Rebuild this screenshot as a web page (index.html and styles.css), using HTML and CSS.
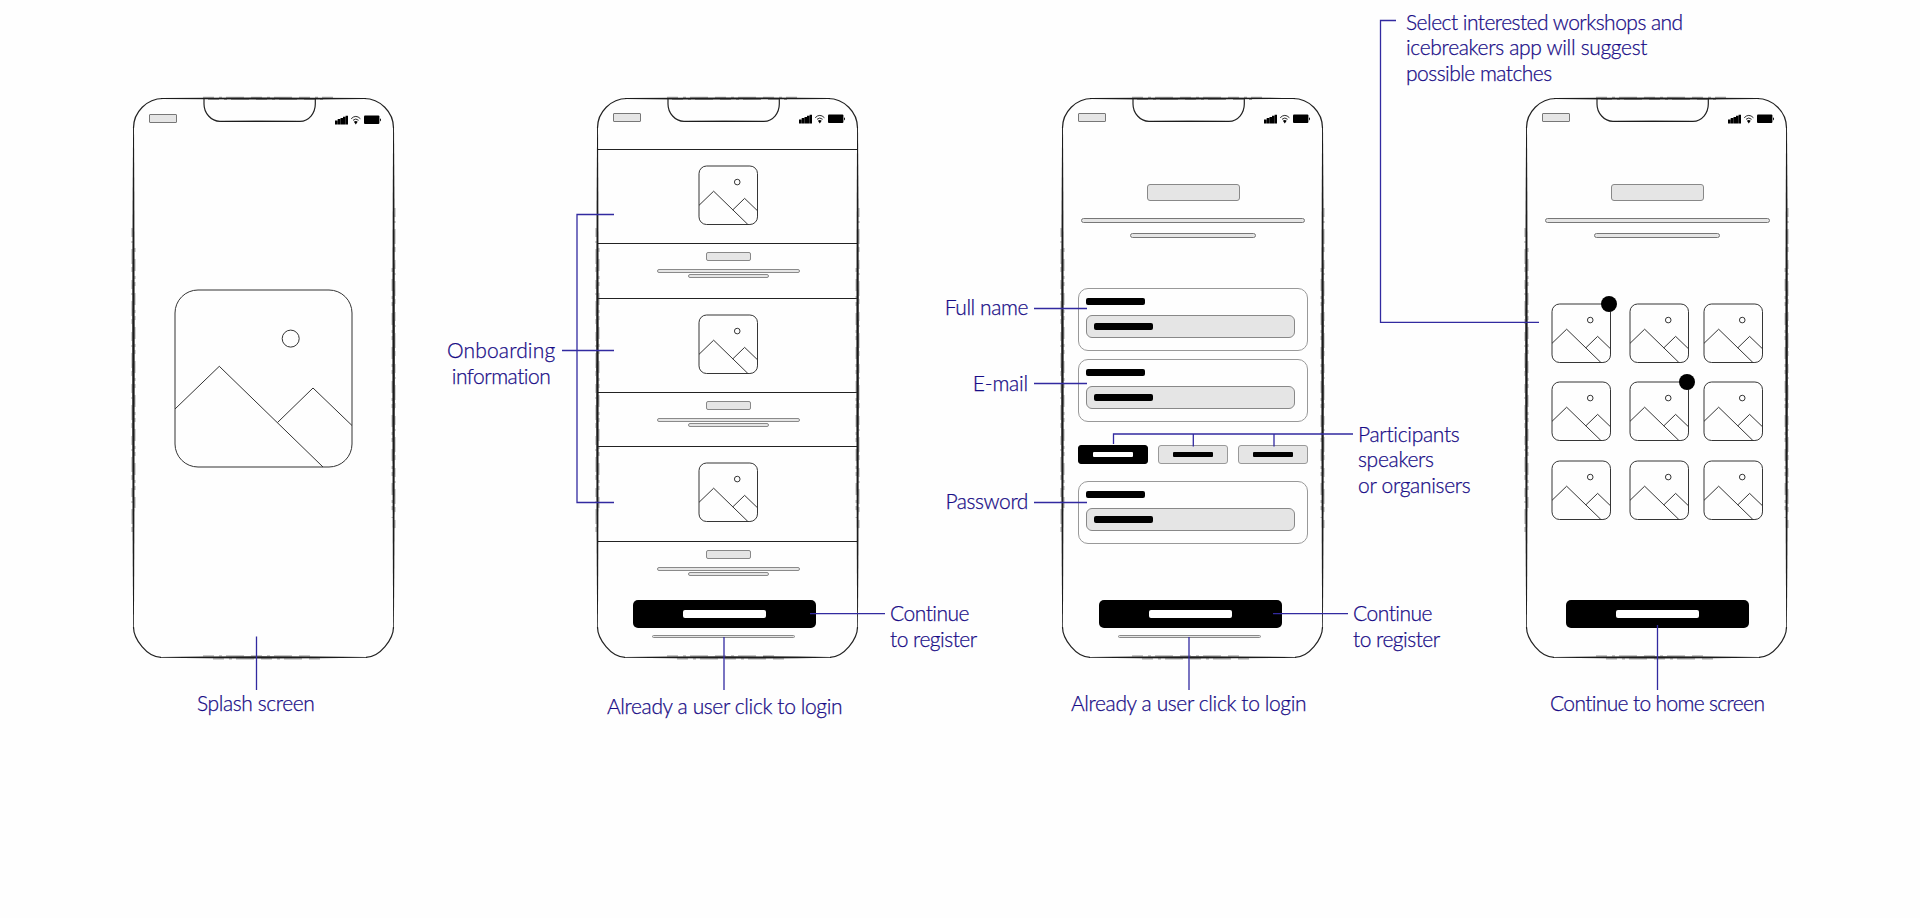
FILE: index.html
```html
<!DOCTYPE html>
<html lang="en">
<head>
    <meta charset="UTF-8">
    <meta name="viewport" content="width=device-width, initial-scale=1.0">
    <title>App Wireframes</title>
    <link rel="stylesheet" href="styles.css">
</head>
<body>
    <!-- Shared drawings -->
    <svg class="defs" width="0" height="0">
        <symbol id="frame" viewBox="-3 -3 267 566">
            <g fill="none" stroke="#222" stroke-width="1.2">
                <path d="M.5 30C.5 14 14 .5 30 .5M231 .5C247 .5 260.500 14 260.500 30M.5 529C.5 541 14 559.300 28 559.300M233 559.300C247 559.300 260.500 541 260.500 529"/>
                <path d="M71 .5V6C71 15 78 23.300 87 23.300H167C176 23.300 182.300 15 182.300 6V.5"/>
            </g>
            <g fill="#1c1c1c">
                <path d="M.1 29Q-1.700 280 .2 531L.9 531Q2.300 280 1 29Z"/>
                <path d="M260.100 29Q258.700 280 260.200 531L260.900 531Q262.700 280 261 29Z"/>
                <path d="M28 .1Q130 -1.200 233 .1V.9Q130 1.900 28 .9Z"/>
                <path d="M27 558.900Q130 557.700 234 558.900V559.700Q130 561.300 27 559.700Z"/>
                <path d="M88 22.900Q127 22.500 167 22.900V23.700Q127 24.400 88 23.700Z"/>
            </g>
            <!-- pencil grain along the thick parts -->
            <g fill="none" stroke="#444" stroke-width=".6">
                <path d="M-.9 130V440M261.900 110V430" stroke-dasharray="9 4 2 6 15 3 5 8"/>
                <path d="M1.900 150V410M259.200 170V420" stroke-dasharray="4 7 12 5 3 3"/>
                <path d="M70 -.7H200M75 1.400H190M80 560.900H190M70 558H180" stroke-dasharray="11 5 3 4 18 7"/>
            </g>
        </symbol>
        <symbol id="picture" viewBox="0 0 177 177">
            <rect x="0" y="0" width="177" height="177" rx="23"/>
            <circle cx="115.700" cy="48.600" r="8.500"/>
            <path d="M0 119L44.300 76.300L148 177M102.500 132.500L138 98L177 135.500"/>
        </symbol>
        <symbol id="status" viewBox="0 0 47 10">
            <path d="M0 5.500h2.500v4H0zM2.700 4h2.600v5.500H2.700zM5.500 3h2.500v6.500H5.500zM8 1.800h2.400v7.700H8zM10.600 .8H13v8.700h-2.400z"/>
            <path d="M16.200 3.700Q20.800-.9 25.400 3.700M18 5.300Q20.800 2.700 23.600 5.300" fill="none" stroke="#111" stroke-width=".9"/>
            <path d="M18.900 6.700Q20.800 5.200 22.700 6.700L20.800 9.400Z"/>
            <rect x="29" y=".6" width="15.400" height="8.400" rx="1"/>
            <path d="M45 3.200Q47 4.800 45 6.400z"/>
        </symbol>
    </svg>

    <main class="board">
        <!-- Splash -->
        <section class="phone">
            <svg class="frame"><use href="#frame"/></svg>
            <div class="status-bar first"><span class="time"></span><svg class="status-icons"><use href="#status"/></svg></div>
            <svg class="picture big"><use href="#picture"/></svg>
        </section>

        <!-- Onboarding -->
        <section class="phone">
            <svg class="frame"><use href="#frame"/></svg>
            <div class="status-bar"><span class="time"></span><svg class="status-icons"><use href="#status"/></svg></div>
            <div class="slide"><svg class="picture"><use href="#picture"/></svg></div>
            <div class="caption"><i class="tag"></i><i class="line"></i><i class="line short"></i></div>
            <div class="slide"><svg class="picture"><use href="#picture"/></svg></div>
            <div class="caption"><i class="tag"></i><i class="line"></i><i class="line short"></i></div>
            <div class="slide"><svg class="picture"><use href="#picture"/></svg></div>
            <div class="caption"><i class="tag"></i><i class="line"></i><i class="line short"></i></div>
            <div class="footer onboarding"><div class="button"><i></i></div><i class="line login"></i></div>
        </section>

        <!-- Register -->
        <section class="phone">
            <svg class="frame"><use href="#frame"/></svg>
            <div class="status-bar"><span class="time"></span><svg class="status-icons"><use href="#status"/></svg></div>
            <div class="heading"><i class="title"></i><i class="text"></i><i class="text short"></i></div>
            <div class="form">
                <div class="field"><i class="ink"></i><div class="input"><i class="ink"></i></div></div>
                <div class="field"><i class="ink"></i><div class="input"><i class="ink"></i></div></div>
                <div class="tabs"><div class="tab active"><i></i></div><div class="tab"><i></i></div><div class="tab"><i></i></div></div>
                <div class="field"><i class="ink"></i><div class="input"><i class="ink"></i></div></div>
            </div>
            <div class="footer register"><div class="button"><i></i></div><i class="line login"></i></div>
        </section>

        <!-- Interests -->
        <section class="phone">
            <svg class="frame"><use href="#frame"/></svg>
            <div class="status-bar"><span class="time"></span><svg class="status-icons"><use href="#status"/></svg></div>
            <div class="heading"><i class="title"></i><i class="text"></i><i class="text short"></i></div>
            <div class="gallery">
                <div class="item selected"><svg class="picture"><use href="#picture"/></svg></div>
                <div class="item"><svg class="picture"><use href="#picture"/></svg></div>
                <div class="item"><svg class="picture"><use href="#picture"/></svg></div>
                <div class="item"><svg class="picture"><use href="#picture"/></svg></div>
                <div class="item selected"><svg class="picture"><use href="#picture"/></svg></div>
                <div class="item"><svg class="picture"><use href="#picture"/></svg></div>
                <div class="item"><svg class="picture"><use href="#picture"/></svg></div>
                <div class="item"><svg class="picture"><use href="#picture"/></svg></div>
                <div class="item"><svg class="picture"><use href="#picture"/></svg></div>
            </div>
            <div class="footer interests"><div class="button"><i></i></div></div>
        </section>
    </main>

    <!-- Annotations -->
    <svg class="leaders" viewBox="0 0 1920 918">
        <path d="M256.500 636.500V690M724 637V690M1189 637V690M1657.500 625V690"/>
        <path d="M614 214.500H577V502.500H614M562 350.500H614"/>
        <path d="M1034 308.500H1087M1034 383.500H1087M1034 502.500H1087"/>
        <path d="M1113.500 444V434H1353M1193.300 434V446.500M1274 434V446.500"/>
        <path d="M810 613.700H885M1273 613.700H1348"/>
        <path d="M1396 20.500H1380.500V322.300H1539"/>
    </svg>
    <p class="label splash">Splash screen</p>
    <p class="label onboarding-info">Onboarding<br><span class="tight">information</span></p>
    <p class="label continue-a">Continue<br>to register</p>
    <p class="label login-a">Already a user click to login</p>
    <p class="label full-name">Full name</p>
    <p class="label email">E-mail</p>
    <p class="label password">Password</p>
    <p class="label roles">Participants<br>speakers<br>or organisers</p>
    <p class="label continue-b">Continue<br>to register</p>
    <p class="label login-b">Already a user click to login</p>
    <p class="label select">Select interested workshops and<br><span class="loose">icebreakers app will suggest</span><br>possible matches</p>
    <p class="label home">Continue to home screen</p>
</body>
</html>
```
FILE: styles.css
```css
* {
    box-sizing: border-box;
}
body {
    margin: 0;
    height: 918px;
    position: relative;
    overflow: hidden;
    background: #fefefe;
    font-family: Lato, "Liberation Sans", sans-serif;
}
i {
    display: block;
}
.defs {
    position: absolute;
}
.board {
    display: flex;
    gap: 203.3px;
    padding: 98px 0 0 133px;
}
.phone {
    position: relative;
    flex: none;
    display: flex;
    flex-direction: column;
    width: 261px;
    height: 560px;
}
.frame {
    position: absolute;
    left: -3px;
    top: -3px;
    width: 267px;
    height: 566px;
}
.status-bar {
    flex: none;
    display: flex;
    justify-content: space-between;
    align-items: flex-start;
    height: 51px;
    padding: 15px 12px 0 16px;
}
.status-bar.first {
    padding-top: 16px;
}
.time {
    width: 28px;
    height: 9px;
    background: #e5e5e5;
    border: 1px solid #777;
    border-radius: 1px;
}
.status-icons {
    width: 47px;
    height: 10px;
    margin-top: 1px;
    fill: #000;
}
.picture {
    display: block;
    width: 58.5px;
    height: 58.5px;
    overflow: visible;
    fill: none;
    stroke: #333;
    stroke-width: 3px;
}
#picture {
    overflow: visible;
}
.picture.big {
    width: 177px;
    height: 177px;
    margin: 141px 0 0 42px;
    stroke-width: 1px;
}

/* Onboarding */
.slide {
    flex: none;
    height: 94.4px;
    padding: 16px 0 0 101.3px;
    border-top: 1px solid #222;
}
.caption {
    flex: none;
    display: flex;
    flex-direction: column;
    align-items: center;
    height: 54.3px;
    padding: 8px 0 0 2px;
    border-top: 1px solid #222;
}
.tag {
    width: 45px;
    height: 9px;
    margin-bottom: 8px;
    background: #e5e5e5;
    border: 1px solid #888;
    border-radius: 2px;
}
.line {
    width: 143px;
    height: 4px;
    background: #e5e5e5;
    border: 1px solid #8a8a8a;
    border-radius: 2px;
}
.line.short {
    width: 81px;
    margin-top: 1px;
}

/* Bottom button */
.footer {
    display: flex;
    flex-direction: column;
    align-items: center;
    width: 183px;
}
.footer.onboarding {
    margin: 4.8px 0 0 35.5px;
}
.footer.register {
    margin: 55.5px 0 0 37.5px;
}
.footer.interests {
    margin: 80.6px 0 0 40px;
}
.button {
    display: flex;
    justify-content: center;
    align-items: center;
    width: 182.5px;
    height: 28.5px;
    background: #000;
    border-radius: 5px;
}
.button i {
    width: 83px;
    height: 8px;
    background: #fff;
    border-radius: 2px;
}
.line.login {
    height: 3px;
    margin: 7px 2px 0 0;
}

/* Register */
.heading {
    flex: none;
    display: flex;
    flex-direction: column;
    align-items: center;
    height: 139px;
    padding: 35px 0 0 2px;
}
.title {
    width: 93px;
    height: 17px;
    margin-bottom: 17px;
    background: #e5e5e5;
    border: 1px solid #888;
    border-radius: 3px;
}
.text {
    width: 224.5px;
    height: 5px;
    margin-bottom: 10px;
    background: #e5e5e5;
    border: 1px solid #777;
    border-radius: 3px;
}
.text.short {
    width: 126px;
}
.form {
    display: flex;
    flex-direction: column;
    gap: 8px;
    padding-left: 16.4px;
}
.field {
    width: 230px;
    height: 63px;
    padding: 9px 0 0 7.5px;
    border: 1px solid #999;
    border-radius: 10px;
}
.ink {
    width: 59px;
    height: 6.5px;
    background: #000;
    border-radius: 2px;
}
.input {
    width: 209px;
    height: 23px;
    margin-top: 10.5px;
    padding: 7px 0 0 7px;
    background: #e5e5e5;
    border: 1px solid #888;
    border-radius: 6px;
}
.tabs {
    display: flex;
    justify-content: space-between;
    width: 230px;
    margin: 15px 0 9px;
}
.tab {
    display: flex;
    justify-content: center;
    align-items: center;
    width: 70px;
    height: 19px;
    background: #e5e5e5;
    border: 1px solid #999;
    border-radius: 3px;
}
.tab i {
    width: 40px;
    height: 5px;
    background: #000;
    border-radius: 1px;
}
.tab.active {
    background: #000;
    border-color: #000;
}
.tab.active i {
    background: #fff;
}

/* Interests */
.gallery {
    display: grid;
    grid-template-columns: 78px 73.3px 59px;
    row-gap: 20px;
    padding: 15.5px 0 0 26.5px;
}
.item {
    position: relative;
    width: 58.5px;
}
.selected::after {
    content: "";
    position: absolute;
    top: -8px;
    right: -6px;
    width: 16px;
    height: 16px;
    background: #000;
    border-radius: 50%;
}

/* Notes and their leader lines */
.leaders {
    position: absolute;
    left: 0;
    top: 0;
    width: 1920px;
    height: 918px;
    fill: none;
    stroke: #322aa0;
    stroke-width: 1.3px;
}
.label {
    position: absolute;
    margin: 0;
    color: #180c86;
    font-size: 21px;
    font-weight: 300;
    font-variant-ligatures: none;
    line-height: 25.5px;
    letter-spacing: -0.42px;
    white-space: nowrap;
    -webkit-text-stroke: 0.25px #180c86;
}
.splash {
    left: 197px;
    top: 690px;
    letter-spacing: -0.4px;
}
.onboarding-info {
    left: 447px;
    top: 337.2px;
    width: 108px;
    text-align: center;
    letter-spacing: 0.15px;
}
.tight {
    letter-spacing: -0.5px;
}
.continue-a {
    left: 890px;
    top: 600px;
    letter-spacing: -0.5px;
}
.login-a {
    left: 607px;
    top: 693px;
    letter-spacing: -0.38px;
}
.full-name, .email, .password {
    right: 892px;
}
.full-name {
    top: 294.2px;
}
.email {
    top: 370px;
    letter-spacing: -0.2px;
}
.password {
    top: 487.5px;
}
.roles {
    left: 1358px;
    top: 420.5px;
    letter-spacing: -0.3px;
}
.continue-b {
    left: 1353px;
    top: 600px;
    letter-spacing: -0.5px;
}
.login-b {
    left: 1071px;
    top: 690px;
    letter-spacing: -0.38px;
}
.select {
    left: 1406px;
    top: 8.5px;
    letter-spacing: -0.53px;
}
.loose {
    letter-spacing: -0.32px;
}
.home {
    left: 1550px;
    top: 690px;
    letter-spacing: -0.65px;
}
```
